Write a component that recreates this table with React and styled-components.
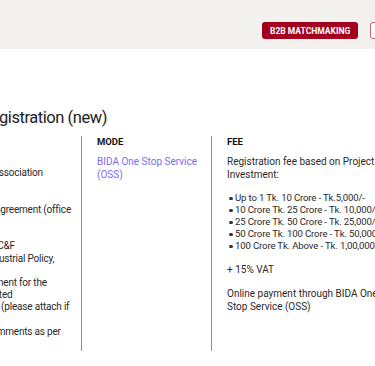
import React from "react";
import styled, { createGlobalStyle } from "styled-components";

const GlobalStyle = createGlobalStyle`
  html, body {
    margin: 0;
    padding: 0;
    overflow: hidden;
    background: #fff;
  }
  body {
    font-family: Roboto, "Liberation Sans", sans-serif;
    color: #222;
  }
`;

const documentLines = [
  "Copy of incorporation",
  "Memorandums, and Articles of association",
  "",
  "Deed / tenancy",
  "Copy of the valid lease or rental agreement (office",
  "space)",
  "Trade license, TIN,",
  "Certificates from the concerned C&F",
  "NOC (if any is needed) as per Industrial Policy,",
  "2022",
  "Commitment/undertaking statement for the",
  "investment proposal, and submitted",
  "also other necessary documents (please attach if",
  "applicable)",
  "Any other related papers, and comments as per",
  "requirement",
];

const feeSlabs = [
  "Up to 1 Tk. 10 Crore - Tk.5,000/-",
  "10 Crore Tk. 25 Crore - Tk. 10,000/-",
  "25 Crore Tk. 50 Crore - Tk. 25,000/-",
  "50 Crore Tk. 100 Crore - Tk. 50,000/-",
  "100 Crore Tk. Above - Tk. 1,00,000/-",
];

export default function App() {
  return (
    <>
      <GlobalStyle />
      <Header>
        <Nav>
          <SolidButton>B2B Matchmaking</SolidButton>
          <OutlineButton>Invest Now</OutlineButton>
        </Nav>
      </Header>

      <Main>
        <Title>Registration (new)</Title>

        <Table>
          <Column>
            <ColumnTitle>Documents Required</ColumnTitle>
            {documentLines.map((line, i) => (
              <DocLine key={i}>{line || "\u00a0"}</DocLine>
            ))}
          </Column>

          <Column $divided>
            <ColumnTitle>Mode</ColumnTitle>
            <ModeLink href="#">BIDA One Stop Service (OSS)</ModeLink>
          </Column>

          <Column $divided>
            <ColumnTitle>Fee</ColumnTitle>
            <Text>Registration fee based on Project Investment:</Text>
            <FeeList>
              {feeSlabs.map((slab) => (
                <FeeItem key={slab}>{slab}</FeeItem>
              ))}
            </FeeList>
            <Text>+ 15% VAT</Text>
            <Text>Online payment through BIDA One Stop Service (OSS)</Text>
          </Column>
        </Table>
      </Main>
    </>
  );
}

const Header = styled.header`
  height: 49px;
  background: #f3f1ed;
  display: flex;
  align-items: flex-end;
  padding-bottom: 10px;
  box-sizing: border-box;
  overflow: hidden;
`;

const Nav = styled.nav`
  display: flex;
  gap: 12px;
  margin-left: 262px;
  white-space: nowrap;
`;

const SolidButton = styled.button`
  height: 17px;
  padding: 0 8px;
  border: none;
  border-radius: 3px;
  background: #a3001f;
  color: #fff;
  font-family: Roboto, sans-serif;
  font-weight: 700;
  font-size: 8.5px;
  letter-spacing: 0;
  text-transform: uppercase;
`;

const OutlineButton = styled(SolidButton)`
  background: #fff;
  color: #a3001f;
  border: 1px solid #c9606f;
`;

const Main = styled.main`
  padding-top: 59px;
`;

const Title = styled.h1`
  margin: 0 0 8px -19px;
  font-size: 16.5px;
  line-height: 20px;
  font-weight: 400;
  letter-spacing: -0.45px;
  color: #222;
  white-space: nowrap;
`;

const Table = styled.div`
  display: grid;
  grid-template-columns: 221px 130px 191px;
  margin-left: -140px;
`;

const Column = styled.div`
  padding: ${(p) => (p.$divided ? "0 10px 1px 15px" : "0 11px 1px 0")};
  border-left: ${(p) => (p.$divided ? "1px solid #8d8d8d" : "none")};
`;

const ColumnTitle = styled.div`
  font-size: 9.5px;
  line-height: 12px;
  font-weight: 700;
  text-transform: uppercase;
  color: #111;
  margin-bottom: 7px;
  white-space: nowrap;
`;

const DocLine = styled.div`
  font-size: 10px;
  line-height: 12.2px;
  letter-spacing: -0.2px;
  color: #2a2a2a;
  white-space: nowrap;
`;

const ModeLink = styled.a`
  display: block;
  font-size: 10px;
  line-height: 13px;
  letter-spacing: 0;
  color: #7a6df2;
  text-decoration: none;
`;

const Text = styled.p`
  margin: 0 0 11px;
  font-size: 10px;
  line-height: 13px;
  letter-spacing: 0;
  color: #2a2a2a;
`;

const FeeList = styled.ul`
  list-style: none;
  margin: 0 0 11px;
  padding: 0 0 0 8px;
`;

const FeeItem = styled.li`
  position: relative;
  font-size: 9.6px;
  line-height: 12px;
  letter-spacing: -0.15px;
  color: #2a2a2a;
  white-space: nowrap;

  &::before {
    content: "";
    position: absolute;
    left: -6px;
    top: 4.5px;
    width: 3.5px;
    height: 3.5px;
    border-radius: 50%;
    background: #333;
  }
`;
